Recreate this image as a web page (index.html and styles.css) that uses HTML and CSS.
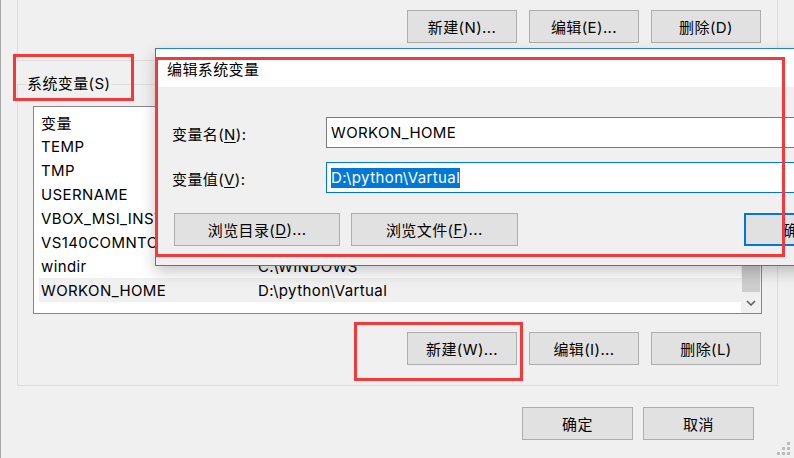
FILE: index.html
```html
<!DOCTYPE html>
<html lang="zh-CN">
<head>
<meta charset="utf-8">
<title>环境变量</title>
<link rel="stylesheet" href="styles.css">
</head>
<body>
<div class="window">
  <div class="group group-user">
    <div class="btnrow">
      <button class="btn">新建(N)...</button>
      <button class="btn">编辑(E)...</button>
      <button class="btn">删除(D)</button>
    </div>
  </div>

  <div class="group group-sys">
    <div class="legend"><span class="legend-text">系统变量(S)</span></div>
    <div class="list">
      <div class="rows">
        <div class="row"><span class="c1">变量</span><span class="c2">值</span></div>
        <div class="row"><span class="c1">TEMP</span><span class="c2">C:\WINDOWS\TEMP</span></div>
        <div class="row"><span class="c1">TMP</span><span class="c2">C:\WINDOWS\TEMP</span></div>
        <div class="row"><span class="c1">USERNAME</span><span class="c2">SYSTEM</span></div>
        <div class="row"><span class="c1">VBOX_MSI_INSTALL_PATH</span><span class="c2">C:\Program Files\Oracle\VirtualBox\</span></div>
        <div class="row"><span class="c1">VS140COMNTOOLS</span><span class="c2">C:\Program Files (x86)\Microsoft Visual Studio 14.0\</span></div>
        <div class="row"><span class="c1">windir</span><span class="c2">C:\WINDOWS</span></div>
        <div class="row row-sel"><span class="c1">WORKON_HOME</span><span class="c2">D:\python\Vartual</span></div>
      </div>
      <div class="vscroll">
        <div class="thumb"></div>
        <div class="arrow">
          <svg width="10" height="6" viewBox="0 0 10 6"><polyline points="1,1 5,5 9,1" fill="none" stroke="#606060" stroke-width="1.6"/></svg>
        </div>
      </div>
    </div>
    <div class="btnrow btnrow-sys">
      <button class="btn">新建(W)...</button>
      <button class="btn">编辑(I)...</button>
      <button class="btn">删除(L)</button>
    </div>
  </div>

  <div class="footer">
    <button class="btn btn-foot">确定</button>
    <button class="btn btn-foot">取消</button>
  </div>

  <svg class="grip" width="14" height="14" viewBox="0 0 14 14">
    <rect x="10" y="0" width="3" height="3" fill="#bcbcbc"/>
    <rect x="5" y="5" width="3" height="3" fill="#bcbcbc"/>
    <rect x="10" y="5" width="3" height="3" fill="#bcbcbc"/>
    <rect x="0" y="10" width="3" height="3" fill="#bcbcbc"/>
    <rect x="5" y="10" width="3" height="3" fill="#bcbcbc"/>
    <rect x="10" y="10" width="3" height="3" fill="#bcbcbc"/>
  </svg>
</div>

<div class="dialog">
  <div class="dlg-title">编辑系统变量</div>
  <div class="dlg-body">
    <div class="field field-1">
      <span class="field-label">变量名(<u>N</u>):</span>
      <div class="input">WORKON_HOME</div>
    </div>
    <div class="field field-2">
      <span class="field-label">变量值(<u>V</u>):</span>
      <div class="input input-focus"><span class="sel">D:\python\Vartual</span></div>
    </div>
    <div class="dlg-btns">
      <button class="btn btn-dlg">浏览目录(<u>D</u>)...</button>
      <button class="btn btn-dlg">浏览文件(<u>F</u>)...</button>
      <button class="btn btn-dlg btn-default">确定</button>
    </div>
  </div>
</div>

<div class="mark mark-label"></div>
<div class="mark mark-dialog"></div>
<div class="mark mark-new"></div>
</body>
</html>
```

FILE: styles.css
```css
* { box-sizing: border-box; }
html, body { margin: 0; padding: 0; }
body {
  width: 794px;
  height: 458px;
  overflow: hidden;
  position: relative;
  background: #f0f0f0;
  font-family: Inter, "Noto Sans CJK SC", sans-serif;
  font-size: 15px;
  letter-spacing: 0.4px;
  color: #000;
}
.window {
  width: 794px;
  height: 458px;
  border-left: 1px solid #a8a8a8;
  display: flex;
  flex-direction: column;
}
.group {
  margin-left: 16px;
  width: 761px;
  border: 1px solid #dcdcdc;
}
.group-user {
  border-top: 0;
  height: 61px;
}
.btnrow {
  display: flex;
  justify-content: flex-end;
  gap: 12px;
  padding-right: 16px;
}
.group-user .btnrow { padding-top: 10px; }
.btn {
  font: inherit;
  letter-spacing: inherit;
  color: #000;
  width: 110px;
  height: 33px;
  padding: 0;
  background: #e1e1e1;
  border: 1px solid #adadad;
  display: flex;
  align-items: center;
  justify-content: center;
  white-space: nowrap;
}
.btn u { text-decoration: underline; text-underline-offset: 2px; }

.group-sys {
  margin-top: 23px;
  border-top: 0;
  padding-bottom: 20px;
}
.legend {
  display: flex;
  align-items: center;
  height: 22px;
  margin: -11px -1px 0;
}
.legend::before {
  content: "";
  width: 10px;
  border-top: 1px solid #dcdcdc;
}
.legend::after {
  content: "";
  flex: 1;
  border-top: 1px solid #dcdcdc;
}
.legend-text { padding: 0 2px 0 0; line-height: 22px; }

.list {
  margin: 11px 15px 0;
  height: 208px;
  border: 1px solid #828790;
  background: #fff;
  display: flex;
  overflow: hidden;
}
.rows {
  flex: 1;
  padding-top: 3px;
  padding-left: 5px;
  overflow: hidden;
}
.row {
  height: 24px;
  display: flex;
  align-items: center;
  white-space: nowrap;
}
.row-sel { background: #f0f0f0; }
.c1 { width: 217px; padding-left: 2px; overflow: hidden; }
.c2 { padding-left: 2px; }
.vscroll {
  width: 20px;
  background: #f0f0f0;
  display: flex;
  flex-direction: column;
}
.thumb {
  flex: 1;
  margin: 0 1px;
  background: #cdcdcd;
}
.arrow {
  height: 21px;
  display: flex;
  align-items: center;
  justify-content: center;
}
.btnrow-sys { margin-top: 18px; }

.footer {
  margin-top: 21px;
  display: flex;
  justify-content: flex-end;
  gap: 10px;
  padding-right: 40px;
}
.btn-foot { width: 111px; height: 33px; }

.grip {
  position: absolute;
  right: 3px;
  bottom: 2px;
}

.dialog {
  position: absolute;
  left: 155px;
  top: 48px;
  width: 700px;
  height: 218px;
  border: 1px solid #2b7fd0;
  background: #f0f0f0;
  box-shadow: 0 6px 14px rgba(0, 0, 0, 0.22);
  display: flex;
  flex-direction: column;
}
.dlg-title {
  height: 38px;
  background: #fff;
  padding: 1px 0 0 11px;
  display: flex;
  align-items: center;
}
.dlg-body { flex: 1; }
.field {
  display: flex;
  align-items: center;
  height: 31px;
}
.field-1 { margin-top: 30px; }
.field-2 { margin-top: 14px; }
.field-label {
  width: 170px;
  padding-left: 16px;
  padding-top: 1px;
}
.field-label u { text-underline-offset: 2px; }
.input {
  flex: 1;
  height: 31px;
  background: #fff;
  border: 1px solid #7a7a7a;
  display: flex;
  align-items: center;
  padding-left: 4px;
  white-space: nowrap;
}
.input-focus { border-color: #0078d7; }
.sel {
  background: #0078d7;
  color: #fff;
  line-height: 20px;
}
.dlg-btns {
  display: flex;
  gap: 11px;
  margin-top: 20px;
  padding-left: 18px;
}
.btn-dlg { width: 167px; height: 33px; }
.btn-default {
  margin-left: 215px;
  width: 111px;
  border: 2px solid #0078d7;
}

.mark {
  position: absolute;
  border: 3px solid #f4393b;
}
.mark-label { left: 13px; top: 54px; width: 121px; height: 47px; }
.mark-dialog { left: 155px; top: 57px; width: 630px; height: 200px; }
.mark-new { left: 354px; top: 322px; width: 169px; height: 59px; }
```
